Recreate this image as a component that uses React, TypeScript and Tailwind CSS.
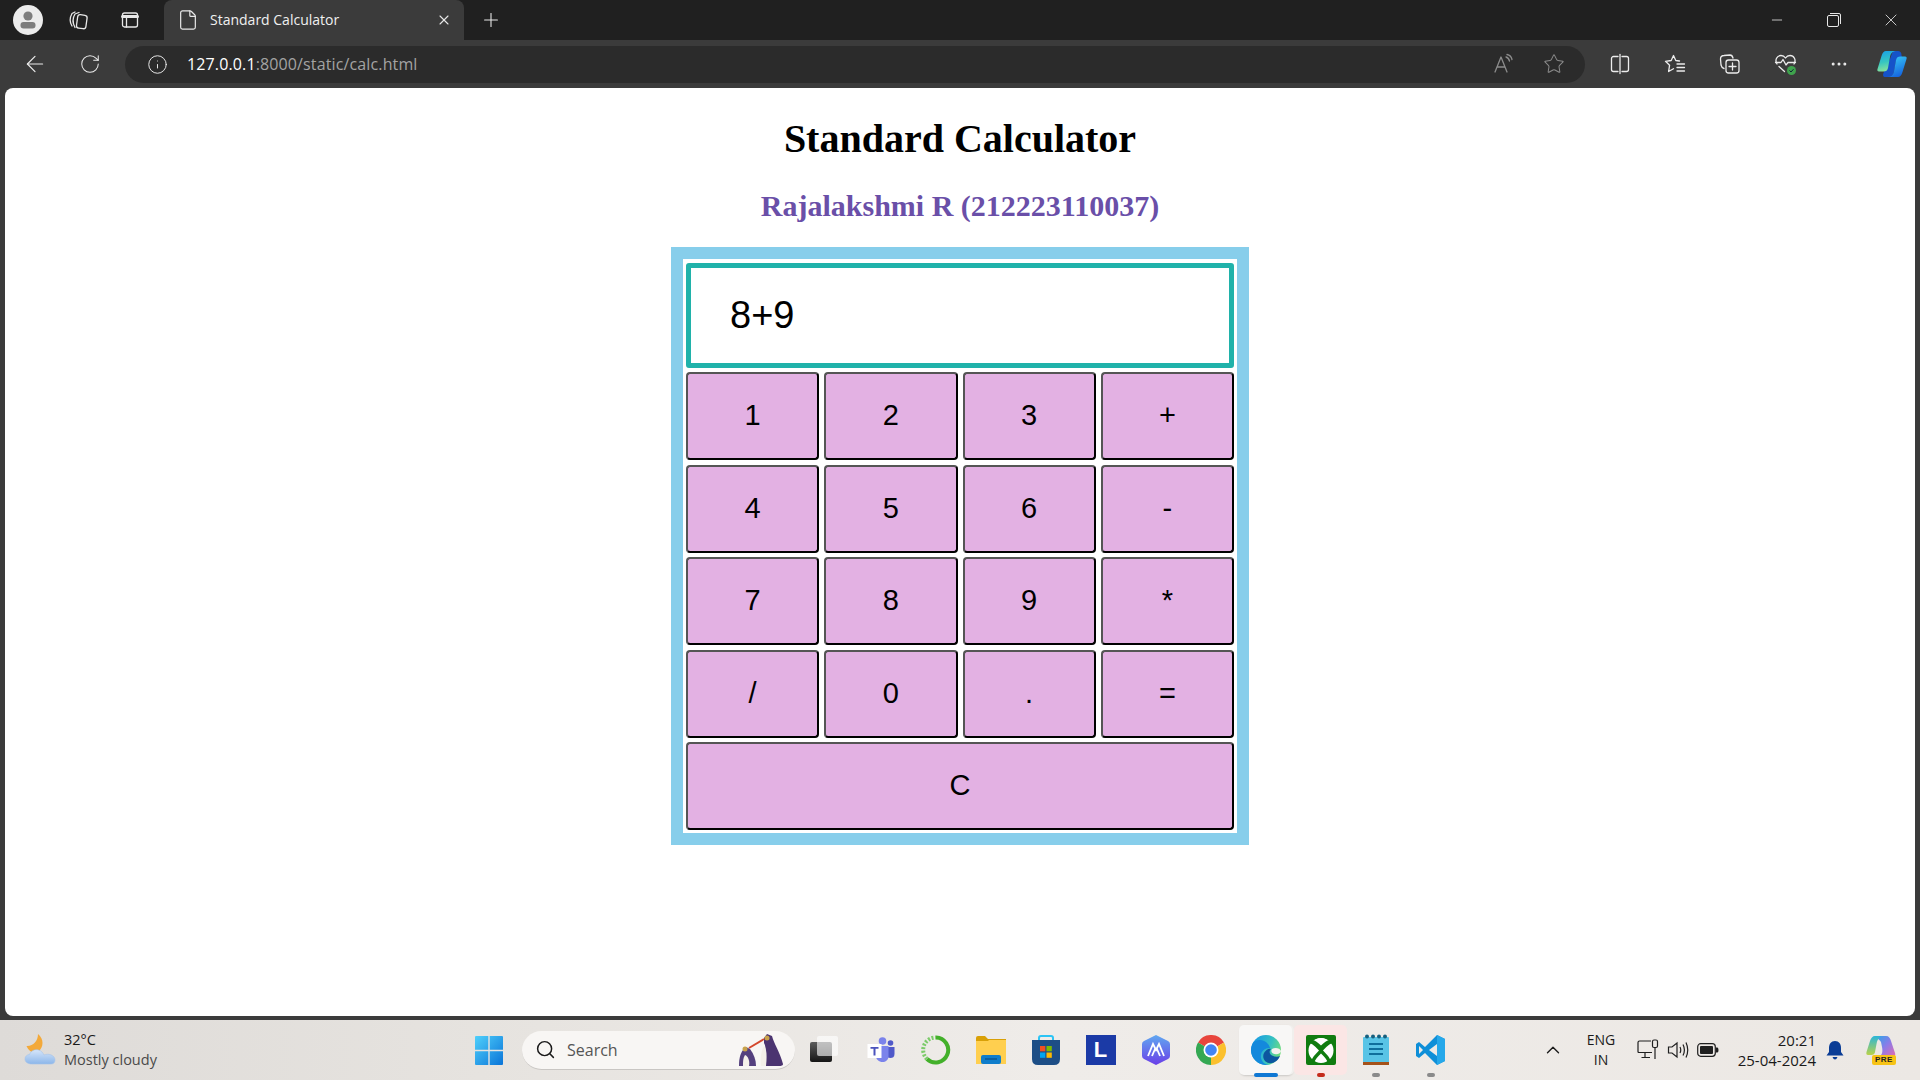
import { Plus, X, Minus, ArrowLeft, RotateCw, Info, Star, MoreHorizontal, ChevronUp, Search, File } from "lucide-react";

const KEYS = ["1", "2", "3", "+", "4", "5", "6", "-", "7", "8", "9", "*", "/", "0", ".", "="];

const stroke = { fill: "none", stroke: "currentColor", strokeWidth: 1.3, strokeLinecap: "round", strokeLinejoin: "round" } as const;

function Avatar() {
  return (
    <svg width="30" height="30" viewBox="0 0 30 30">
      <circle cx="15" cy="15" r="15" fill="#ececec" />
      <circle cx="15" cy="11" r="4.6" fill="#7d7d7d" />
      <rect x="7.5" y="17" width="15" height="6.5" rx="3" fill="#7d7d7d" />
    </svg>
  );
}

function Workspaces() {
  return (
    <svg width="22" height="22" viewBox="0 0 22 22" {...stroke}>
      <path d="M5 17 C2.5 13 2.5 9 5 4.5 L8 3" />
      <path d="M8 18.5 C5.5 14 5.5 9 8 5 L12 3.5" />
      <rect x="10" y="6" width="9.5" height="13.5" rx="2.5" transform="rotate(8 15 13)" />
    </svg>
  );
}

function VerticalTabs() {
  return (
    <svg width="20" height="20" viewBox="0 0 20 20" {...stroke}>
      <rect x="2.5" y="3" width="15" height="14" rx="2" />
      <path d="M2.5 6.5 H17.5" strokeWidth="3" />
      <path d="M6.5 7 V17" />
    </svg>
  );
}

function ReadAloud() {
  return (
    <svg width="22" height="22" viewBox="0 0 22 22" {...stroke}>
      <path d="M2 19 L8 4 L14 19 M4.5 14 H11.5" />
      <path d="M13 4 C15 4.5 16 6 16.5 8 M14 1.5 C17 2 18.5 4 19 6.5" />
    </svg>
  );
}

function SplitScreen() {
  return (
    <svg width="22" height="22" viewBox="0 0 22 22" {...stroke}>
      <path d="M9 3.5 H4.5 A2 2 0 0 0 2.5 5.5 V16.5 A2 2 0 0 0 4.5 18.5 H9" />
      <path d="M13 3.5 H17.5 A2 2 0 0 1 19.5 5.5 V16.5 A2 2 0 0 1 17.5 18.5 H13" />
      <path d="M11 1.5 V20.5" />
    </svg>
  );
}

function Favorites() {
  return (
    <svg width="22" height="22" viewBox="0 0 22 22" {...stroke}>
      <path d="M15.5 8 L11.8 7.5 L9.5 2.5 L7.2 7.5 L1.5 8.3 L5.6 12.2 L4.6 18.5 L9.5 15.8" />
      <path d="M13 11 H20.5 M13 14.5 H20.5 M13 18 H20.5" />
    </svg>
  );
}

function Collections() {
  return (
    <svg width="22" height="22" viewBox="0 0 22 22" {...stroke}>
      <path d="M5 15.5 C3 15 2.5 14 2 12 L1.5 6 C1.5 3.5 3 2.5 5 2.5 L11 2 C12.5 2 13.5 3 14 5" />
      <rect x="7" y="7" width="13" height="13" rx="2.5" />
      <path d="M13.5 10 V17 M10 13.5 H17" />
    </svg>
  );
}

function Health() {
  return (
    <svg width="24" height="24" viewBox="0 0 24 24">
      <g {...stroke}>
        <path d="M3 12 C0.5 8 3 3.5 7 3.5 C9 3.5 10.5 4.5 11.5 6 C12.5 4.5 14 3.5 16 3.5 C20 3.5 22.5 8 20 12" />
        <path d="M1.5 10.5 H7 L9 7.5 L12 13 L14 10.5 H21.5" />
        <path d="M5 14.5 L10.5 19.5" />
      </g>
      <circle cx="17.5" cy="18.5" r="4.5" fill="#3fa34d" />
      <path d="M15.5 18.5 L17 20 L19.5 17.2" fill="none" stroke="#123" strokeWidth="1" />
    </svg>
  );
}

function Copilot({ size = 30 }: { size?: number }) {
  return (
    <svg width={size} height={size} viewBox="0 0 30 30">
      <defs>
        <linearGradient id="cpa" x1="0.2" y1="0" x2="0.4" y2="1">
          <stop offset="0" stopColor="#1aa0e8" />
          <stop offset="0.55" stopColor="#37c6c0" />
          <stop offset="1" stopColor="#8be39a" />
        </linearGradient>
        <linearGradient id="cpb" x1="0.2" y1="0" x2="0.6" y2="1">
          <stop offset="0" stopColor="#38c8f4" />
          <stop offset="1" stopColor="#1463e0" />
        </linearGradient>
      </defs>
      <path d="M13 10 L16 2 H21 C23 2 24.5 3.5 24.5 6 L25 9 H22 C20 9 19.5 10 19 12 L17 22 C16.5 26 14 28 11 28 H8 C6 28 5.5 26 6.5 24 Z" fill="#1553c9" />
      <path d="M9 2 H19 C15 2.5 13.5 5 13 8 L11 19 C10.5 21.5 9 22.5 6.5 22.5 H2 C0.5 22.5 0 21.5 0.5 20 L4.5 7 C5.5 3.5 7 2 9 2 Z" fill="url(#cpa)" />
      <path d="M21 28 H11 C15 27.5 16.5 25 17 22 L19 11 C19.5 8.5 21 7.5 23.5 7.5 H28 C29.5 7.5 30 8.5 29.5 10 L25.5 23 C24.5 26.5 23 28 21 28 Z" fill="url(#cpb)" />
    </svg>
  );
}

function Weather() {
  return (
    <svg width="32" height="34" viewBox="0 0 32 34">
      <defs>
        <linearGradient id="wc" x1="0" y1="0" x2="0" y2="1">
          <stop offset="0" stopColor="#d6e5f9" />
          <stop offset="1" stopColor="#8db7ea" />
        </linearGradient>
      </defs>
      <path d="M14 1 C20 6 20 14 14 19 C10 21 5 19 2.5 13 C9 13.5 14 8 14 1 Z" fill="#f3a93a" />
      <path d="M8 31 C3 31 1 28.5 1 26 C1 23 3.5 21.5 5.5 21.5 C7 17.5 11 16 14.5 17 C17.5 17.8 19 20 20 22 C24 20 31 22 31 27 C31 29.5 29.5 31 27 31 Z" fill="url(#wc)" stroke="#a5c3ea" strokeWidth="0.6" />
    </svg>
  );
}

function WinLogo() {
  return (
    <svg width="28" height="29" viewBox="0 0 28 29">
      <defs>
        <linearGradient id="win" x1="0" y1="0" x2="1" y2="1">
          <stop offset="0" stopColor="#4fd0fb" />
          <stop offset="1" stopColor="#0a74d8" />
        </linearGradient>
      </defs>
      <path d="M0 1 Q0 0 1 0 H13.3 V13.8 H0 Z M14.7 0 H27 Q28 0 28 1 V13.8 H14.7 Z M0 15.2 H13.3 V29 H1 Q0 29 0 28 Z M14.7 15.2 H28 V28 Q28 29 27 29 H14.7 Z" fill="url(#win)" />
    </svg>
  );
}

function Penguins() {
  return (
    <svg width="48" height="34" viewBox="0 0 48 34">
      <path d="M28 5 L31 1 L36 3 C38 11 44 19 47 31 C47 33 44 33 42 33 L30 33 C29 25 31 15 28 10 Z" fill="#4b3470" />
      <path d="M28 13 C31 16 31 24 30 33 L25 33 C24 26 25 18 28 13 Z" fill="#f3efe8" />
      <path d="M7 17 L10 14 L14 16 C18 21 20 27 20 33 H3 C3 26 4 21 7 17 Z" fill="#54407e" />
      <path d="M9 22 C12 23 14 28 13 33 H7 C7 28 7 25 9 22 Z" fill="#f5f1ea" />
      <path d="M13 15 L28 6" stroke="#d4472c" strokeWidth="2" />
      <circle cx="9" cy="16" r="2.5" fill="#c9a24a" />
      <circle cx="31" cy="5" r="2.5" fill="#c9a24a" />
    </svg>
  );
}

function TaskView() {
  return (
    <svg width="30" height="30" viewBox="0 0 30 30">
      <defs>
        <linearGradient id="tvd" x1="0" y1="0" x2="0" y2="1">
          <stop offset="0" stopColor="#5c5c5c" />
          <stop offset="1" stopColor="#151515" />
        </linearGradient>
      </defs>
      <rect x="1" y="7" width="22" height="20" rx="2" fill="url(#tvd)" />
      <rect x="8" y="1" width="21" height="20" rx="2" fill="#fff" opacity="0.62" />
    </svg>
  );
}

function Teams() {
  return (
    <svg width="28" height="28" viewBox="0 0 28 28">
      <circle cx="23.5" cy="7" r="2.8" fill="#5059c9" />
      <path d="M19 11 H27.5 V18 C27.5 21 25.5 22 23.5 22 C21 22 19 20.5 19 18 Z" fill="#5059c9" />
      <circle cx="15.5" cy="5" r="3.8" fill="#7b83eb" />
      <path d="M9 10 H21.5 V20 C21.5 24 18.5 26 15.5 26 C12 26 9 23.5 9 20 Z" fill="#7b83eb" />
      <rect x="0.5" y="8" width="14" height="14" fill="#fff" />
      <path d="M3.5 11 H11.5 V12.8 H8.5 V19.5 H6.5 V12.8 H3.5 Z" fill="#4b53bc" />
    </svg>
  );
}

function Ring() {
  return (
    <svg width="30" height="30" viewBox="0 0 30 30" fill="none">
      <path d="M15 2.5 A12.5 12.5 0 1 1 6 24" stroke="#43b02a" strokeWidth="4" />
      <path d="M6 24 A12.5 12.5 0 0 1 15 2.5" stroke="#7ccb6a" strokeWidth="4" strokeDasharray="2 1.6" />
    </svg>
  );
}

function Folder() {
  return (
    <svg width="30" height="28" viewBox="0 0 30 28">
      <path d="M0 2 Q0 0 2 0 H9 L12 3 H30 V8 H0 Z" fill="#d9a007" />
      <path d="M0 5 H12 L13 4 H30 V28 H0 Z" fill="#ffcf4f" />
      <rect x="5" y="19" width="20" height="9" rx="2" fill="#0f7dcb" />
      <path d="M9 23 H21" stroke="#0a4e85" strokeWidth="1.2" />
    </svg>
  );
}

function Store() {
  return (
    <svg width="30" height="30" viewBox="0 0 30 30">
      <path d="M8 7 V3 Q8 1 10 1 H20 Q22 1 22 3 V7" fill="none" stroke="#2cc4f5" strokeWidth="2" />
      <path d="M1 5 H29 V24 Q29 30 23 30 H7 Q1 30 1 24 Z" fill="#1d4e86" />
      <rect x="9" y="11" width="5.3" height="5.3" fill="#f25022" />
      <rect x="15.5" y="11" width="5.3" height="5.3" fill="#7fba00" />
      <rect x="9" y="17.5" width="5.3" height="5.3" fill="#00a4ef" />
      <rect x="15.5" y="17.5" width="5.3" height="5.3" fill="#ffb900" />
    </svg>
  );
}

function Hex() {
  return (
    <svg width="28" height="30" viewBox="0 0 28 30">
      <defs>
        <linearGradient id="hx" x1="0" y1="0" x2="0" y2="1">
          <stop offset="0" stopColor="#60a8f0" />
          <stop offset="1" stopColor="#6a3fe8" />
        </linearGradient>
      </defs>
      <path d="M14 0 L26 6 Q28 7 28 9 V21 Q28 23 26 24 L14 30 L2 24 Q0 23 0 21 V9 Q0 7 2 6 Z" fill="url(#hx)" />
      <path d="M6 21 L11 9 L14 15 L17 9 L22 21 M10 21 L13 14 M18 21 L15 14" fill="none" stroke="#fff" strokeWidth="1.8" />
    </svg>
  );
}

function Chrome() {
  return (
    <svg width="30" height="30" viewBox="0 0 30 30">
      <path d="M15 15 L2 7.5 A15 15 0 0 1 28 7.5 Z" fill="#e8453c" />
      <path d="M15 15 L28 7.5 A15 15 0 0 1 15 30 Z" fill="#fbc02d" />
      <path d="M15 15 L15 30 A15 15 0 0 1 2 7.5 Z" fill="#34a853" />
      <circle cx="15" cy="15" r="7.5" fill="#fff" />
      <circle cx="15" cy="15" r="5.8" fill="#4285f4" />
    </svg>
  );
}

function Edge() {
  return (
    <svg width="30" height="30" viewBox="0 0 30 30">
      <defs>
        <linearGradient id="eg" x1="0.1" y1="0.2" x2="1" y2="0.5">
          <stop offset="0" stopColor="#1b9de2" />
          <stop offset="0.6" stopColor="#35c1c1" />
          <stop offset="1" stopColor="#6fdc7e" />
        </linearGradient>
      </defs>
      <circle cx="15" cy="15" r="15" fill="url(#eg)" />
      <path d="M19 13 C13 13 9 17 10 23 C11 27 14 30 18 30 C8 31 0 24 0 15 C0 12 1 10 2 8 C5 4 13 4 17 9 C18 10.5 19 12 19 13 Z" fill="#1489dc" />
      <path d="M29 21 C27 26 22 29 18 28 C13 27 11 22 13 18 C15 14 19 13 20 14 C18 16 18 19 21 20.5 C24 22 27 22 29 21 Z" fill="#0c56a0" />
      <path d="M30 16 C30 19 25 20 22 18.5 C20 17.5 20 15 21 14 C24 12 29 13 30 16 Z" fill="#f4f2ef" />
    </svg>
  );
}

function Xbox() {
  return (
    <svg width="30" height="30" viewBox="0 0 30 30">
      <rect width="30" height="30" rx="2" fill="#107c10" />
      <circle cx="15" cy="15.5" r="12.5" fill="#fff" />
      <path d="M15 10.5 C12 7.5 9 5 6.5 5 L4 8.5 C6 8.5 10 12 13 15.5 C9 19.5 6 23 5.5 25.5 L8 28 C9 24.5 12 21.5 15 18.5 C18 21.5 21 24.5 22 28 L24.5 25.5 C24 23 21 19.5 17 15.5 C20 12 24 8.5 26 8.5 L23.5 5 C21 5 18 7.5 15 10.5 Z" fill="#107c10" />
      <path d="M15 3 C12 3 10 4 9 5 C11 5.5 13 7 15 8.5 C17 7 19 5.5 21 5 C20 4 18 3 15 3 Z" fill="#fff" />
    </svg>
  );
}

function Notepad() {
  return (
    <svg width="26" height="32" viewBox="0 0 26 32">
      <rect x="0" y="3" width="26" height="26" rx="1" fill="#59c4e6" />
      <path d="M0 28 H26 V31 H0 Z" fill="#a5521a" />
      <path d="M6 10 H20 M6 15 H20 M6 20 H20" stroke="#0f6f9c" strokeWidth="2" />
      <circle cx="4" cy="2.5" r="2" fill="#16607f" />
      <circle cx="10" cy="2.5" r="2" fill="#16607f" />
      <circle cx="16" cy="2.5" r="2" fill="#16607f" />
      <circle cx="22" cy="2.5" r="2" fill="#16607f" />
    </svg>
  );
}

function VSCode() {
  return (
    <svg width="30" height="30" viewBox="0 0 30 30">
      <path d="M21 0 L29 4 V26 L21 30 L9 18 L3 23 L0 21 V9 L3 7 L9 12 Z M21 9 L13 15 L21 21 Z M3 11 V19 L7 15 Z" fill="#0f8fd8" fillRule="evenodd" />
      <path d="M21 0 L29 4 V26 L21 30 Z" fill="#26a8ea" />
    </svg>
  );
}

function Network() {
  return (
    <svg width="22" height="22" viewBox="0 0 22 22" fill="none" stroke="#1f1f1f" strokeWidth="1.2">
      <path d="M15 13.5 H2 Q1 13.5 1 12.5 V3.5 Q1 2 2.5 2 H14" />
      <path d="M8 14 V18 M4.5 18.5 H13" />
      <rect x="15.5" y="1" width="5" height="7.5" rx="1.5" />
      <path d="M18 8.5 V20" />
    </svg>
  );
}

function Volume() {
  return (
    <svg width="22" height="20" viewBox="0 0 22 20" fill="none" stroke="#1f1f1f" strokeWidth="1.2">
      <path d="M1.5 7 H5 L10 3 V17 L5 13 H1.5 Z" />
      <path d="M13 7 Q14.5 10 13 13 M16 4.5 Q18.8 10 16 15.5 M19 2.5 Q22.5 10 19 17.5" />
    </svg>
  );
}

function Battery() {
  return (
    <svg width="22" height="14" viewBox="0 0 22 14">
      <rect x="0.7" y="0.7" width="17.6" height="12.6" rx="3" fill="none" stroke="#1f1f1f" strokeWidth="1.2" />
      <rect x="3" y="3" width="13" height="8" rx="1" fill="#1f1f1f" />
      <path d="M19 4.5 H20.5 Q21.5 5 21.5 7 Q21.5 9 20.5 9.5 H19 Z" fill="#1f1f1f" />
    </svg>
  );
}

function Bell() {
  return (
    <svg width="18" height="20" viewBox="0 0 18 20">
      <path d="M9 1 C5 1 3 4 3 8 V12 L0.5 15.5 H17.5 L15 12 V8 C15 4 13 1 9 1 Z" fill="#0b3d96" />
      <path d="M6.5 17 H11.5 Q10.5 19.5 9 19.5 Q7.5 19.5 6.5 17 Z" fill="#0b3d96" />
    </svg>
  );
}

function CopilotPre() {
  return (
    <div className="relative h-[30px] w-[30px]">
      <svg width="30" height="26" viewBox="0 0 30 26">
        <defs>
          <linearGradient id="cpp" x1="0" y1="0" x2="1" y2="1">
            <stop offset="0" stopColor="#2aa8e8" />
            <stop offset="0.5" stopColor="#8a7be8" />
            <stop offset="1" stopColor="#e46bb0" />
          </linearGradient>
          <linearGradient id="cpg" x1="0" y1="0" x2="0" y2="1">
            <stop offset="0" stopColor="#2bb6d8" />
            <stop offset="1" stopColor="#b9d24a" />
          </linearGradient>
        </defs>
        <path d="M9 1 H20 C23 1 24 3 25 6 L29 18 C30 21 28 22 26 22 H13 C16 20 17 17 16 12 L15 7 C14 5 12 4 9 1 Z" fill="url(#cpp)" />
        <path d="M9 1 H15 C12 3 11 6 10.5 9 L9 17 C8.5 20 6 20 4 20 H2 C0.5 20 0 19 0.5 17 L4 6 C5 3 6.5 1 9 1 Z" fill="url(#cpg)" />
      </svg>
      <span className="absolute bottom-0 left-[6px] rounded-[2px] bg-[#f7c315] px-[3px] text-[8px] font-bold leading-[10px] tracking-[0.5px] text-[#222] [font-family:'Liberation_Sans',sans-serif]">
        PRE
      </span>
    </div>
  );
}

const TASK_ICONS = [
  { key: "teams", icon: <Teams /> },
  { key: "ring", icon: <Ring /> },
  { key: "folder", icon: <Folder /> },
  { key: "store", icon: <Store /> },
  {
    key: "l",
    icon: (
      <div className="flex h-[30px] w-[30px] items-center justify-center bg-[#1b3aa6] text-[22px] font-bold leading-none text-white [font-family:'Liberation_Sans',sans-serif]">
        L
      </div>
    ),
  },
  { key: "hex", icon: <Hex /> },
  { key: "chrome", icon: <Chrome /> },
  { key: "edge", icon: <Edge />, bg: "bg-[#f8f7f6] shadow-[2px_0_0_#f1efed,1px_1px_2px_rgba(0,0,0,0.15)]", bar: "w-[24px] bg-[#0f78d4]" },
  { key: "xbox", icon: <Xbox />, bg: "bg-[#fbe6e5]", bar: "w-[8px] bg-[#c42b1c]" },
  { key: "notes", icon: <Notepad />, bar: "w-[8px] bg-[#8a8a8a]" },
  { key: "code", icon: <VSCode />, bar: "w-[8px] bg-[#8a8a8a]" },
];

function ToolIcon({ children, className }: { children: React.ReactNode; className: string }) {
  return <div className={`flex h-full shrink-0 items-center justify-center ${className}`}>{children}</div>;
}

export default function App() {
  return (
    <div className="flex h-[1080px] w-[1920px] flex-col overflow-hidden bg-[#3b3b3b] [font-family:'Noto_Sans',sans-serif]">
      {/* tab strip */}
      <header className="flex h-[40px] shrink-0 items-center bg-[#202020] text-[#e8e8e8]">
        <ToolIcon className="w-[55px]"><Avatar /></ToolIcon>
        <ToolIcon className="w-[45px]"><Workspaces /></ToolIcon>
        <ToolIcon className="w-[64px] pr-[4px]"><VerticalTabs /></ToolIcon>
        <div className="flex h-full w-[300px] items-center rounded-t-[8px] bg-[#3b3b3b] pl-[13px] pr-[12px]">
          <File size={22} strokeWidth={1.3} />
          <span className="ml-[11px] flex-1 pb-[2px] text-[14px] [font-family:'Open_Sans',sans-serif] text-[#f0f0f0]">Standard Calculator</span>
          <X size={16} strokeWidth={1.6} />
        </div>
        <ToolIcon className="w-[54px]"><Plus size={22} strokeWidth={1.2} /></ToolIcon>
        <div className="flex-1" />
        <ToolIcon className="w-[56px]"><Minus size={16} strokeWidth={1.2} /></ToolIcon>
        <ToolIcon className="w-[57px]">
          <svg width="14" height="14" viewBox="0 0 14 14" fill="none" stroke="currentColor" strokeWidth="1"><rect x="0.5" y="2.5" width="11" height="11" rx="1.5" /><path d="M3 .5 H12 Q13.5 .5 13.5 2 V11" /></svg>
        </ToolIcon>
        <ToolIcon className="w-[58px]"><X size={20} strokeWidth={1} /></ToolIcon>
      </header>

      {/* address bar row */}
      <div className="flex h-[48px] shrink-0 items-center text-[#ececec]">
        <ToolIcon className="w-[70px]"><ArrowLeft size={26} strokeWidth={1.1} /></ToolIcon>
        <ToolIcon className="w-[40px]"><RotateCw size={22} strokeWidth={1.1} /></ToolIcon>
        <div className="ml-[15px] flex h-[37px] w-[1460px] items-center rounded-full bg-[#2b2b2b]">
          <div className="ml-[22px] flex w-[40px] items-center"><Info size={21} strokeWidth={1.1} /></div>
          <span className="text-[16px] tracking-[0.13px] [font-family:'Open_Sans',sans-serif] text-white">
            127.0.0.1<span className="text-[#a3a3a3]">:8000/static/calc.html</span>
          </span>
          <div className="flex-1" />
          <div className="flex items-center gap-[28px] pr-[20px] text-[#8c8c8c]">
            <ReadAloud />
            <Star size={22} strokeWidth={1.1} />
          </div>
        </div>
        <ToolIcon className="ml-[24px] w-[22px]"><SplitScreen /></ToolIcon>
        <ToolIcon className="ml-[33px] w-[22px]"><Favorites /></ToolIcon>
        <ToolIcon className="ml-[33px] w-[22px]"><Collections /></ToolIcon>
        <ToolIcon className="ml-[33px] w-[24px]"><Health /></ToolIcon>
        <ToolIcon className="ml-[30px] w-[22px]"><MoreHorizontal size={20} strokeWidth={1.6} /></ToolIcon>
        <ToolIcon className="ml-[27px] w-[30px]"><Copilot /></ToolIcon>
      </div>

      {/* page */}
      <main className="mx-[5px] flex h-[928px] flex-col items-center rounded-[8px] bg-white pt-[27px] text-black">
        <h1 className="text-[40px] font-bold leading-[48px] [font-family:'Liberation_Serif',serif]">Standard Calculator</h1>
        <h2 className="mt-[25px] text-[30px] font-bold leading-[36px] text-[#6a4fa8] [font-family:'Liberation_Serif',serif]">
          Rajalakshmi R (212223110037)
        </h2>
        <div className="mt-[23px] w-[578px] border-[12px] border-[#87ceeb] bg-white px-[3px] pb-[3px] pt-[4px] [font-family:'Liberation_Sans',sans-serif]">
          <div className="flex h-[105px] items-center rounded-[3px] border-[5px] border-[#20b2aa] pl-[39px] text-[38px]">8+9</div>
          <div className="mt-[4px] grid grid-cols-4 gap-x-[5px] gap-y-[4.5px]">
            {KEYS.map((k) => (
              <button
                key={k}
                type="button"
                className="h-[88px] rounded-[4px] border-2 border-b-black border-l-[#555] border-r-black border-t-[#555] bg-[#e3b1e3] text-[29px] text-black"
              >
                {k}
              </button>
            ))}
            <button
              type="button"
              className="col-span-4 h-[88px] rounded-[4px] border-2 border-b-black border-l-[#555] border-r-black border-t-[#555] bg-[#e3b1e3] text-[29px] text-black"
            >
              C
            </button>
          </div>
        </div>
      </main>

      {/* taskbar */}
      <footer className="mt-[4px] flex h-[60px] shrink-0 items-center bg-[linear-gradient(90deg,#dedbd8_0%,#e6e3df_25%,#efece9_55%,#ece8e4_100%)] text-[#1a1a1a] [font-family:'Open_Sans',sans-serif]">
        <div className="flex w-[475px] items-center pl-[24px]">
          <Weather />
          <div className="ml-[8px] text-[14.5px] leading-[20px]">
            <div>32°C</div>
            <div className="text-[#4a4a4a]">Mostly cloudy</div>
          </div>
        </div>
        <WinLogo />
        <div className="ml-[19px] flex h-[39px] w-[273px] items-center rounded-full border-b border-[#c9c6c3] bg-[#f8f6f4] pl-[13px] pr-[11px]">
          <Search size={21} strokeWidth={1.7} />
          <span className="ml-[11px] flex-1 text-[16px] text-[#555]">Search</span>
          <Penguins />
        </div>
        <div className="flex h-full w-[55px] items-center justify-center pl-[2px]"><TaskView /></div>
        <div className="ml-[3px] flex h-full">
          {TASK_ICONS.map((t) => (
            <div key={t.key} className="relative flex h-full w-[55px] items-center justify-center">
              {t.bg ? <div className={`absolute inset-x-[1px] inset-y-[5px] rounded-[5px] ${t.bg}`} /> : null}
              <div className="relative">{t.icon}</div>
              {t.bar ? <div className={`absolute bottom-[3px] h-[4px] rounded-full ${t.bar}`} /> : null}
            </div>
          ))}
        </div>
        <div className="flex-1" />
        <ToolIcon className="w-[24px]"><ChevronUp size={22} strokeWidth={1.5} /></ToolIcon>
        <div className="ml-[16px] w-[40px] text-center text-[14px] leading-[20px]">
          <div>ENG</div>
          <div>IN</div>
        </div>
        <ToolIcon className="ml-[16px] w-[22px]"><Network /></ToolIcon>
        <ToolIcon className="ml-[8px] w-[22px]"><Volume /></ToolIcon>
        <ToolIcon className="ml-[8px] w-[22px]"><Battery /></ToolIcon>
        <div className="ml-[13px] w-[84px] text-right text-[15px] leading-[20px]">
          <div>20:21</div>
          <div className="whitespace-nowrap">25-04-2024</div>
        </div>
        <ToolIcon className="ml-[9px] w-[20px]"><Bell /></ToolIcon>
        <ToolIcon className="ml-[21px] w-[30px]"><CopilotPre /></ToolIcon>
        <div className="w-[24px]" />
      </footer>
    </div>
  );
}
